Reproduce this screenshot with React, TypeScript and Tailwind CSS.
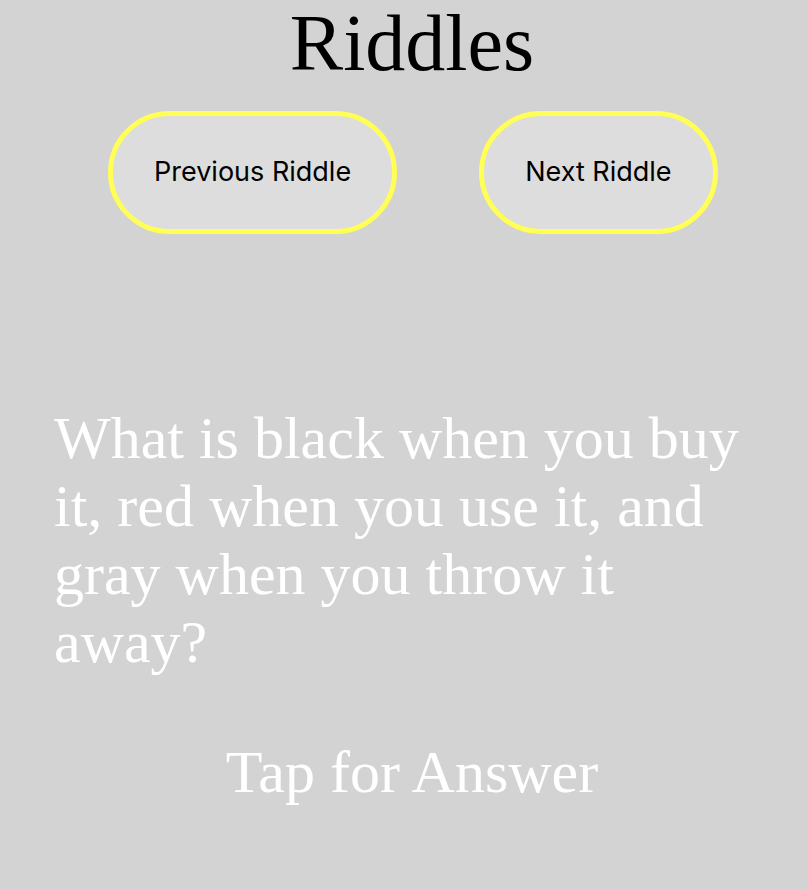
export default function App() {
  return (
    <div className="min-h-[890px] w-full bg-[#d3d3d3] pl-[16px]">
      <h1 className="text-center font-['Liberation_Serif',serif] text-[80px] leading-[86px] text-black">
        Riddles
      </h1>

      <div className="mt-[25px] flex gap-[82px] pl-[92px]">
        <button className="flex h-[123px] items-center rounded-full border-[5px] border-[#ffff55] bg-[#dddddd] px-[41px] font-['Inter',sans-serif] text-[27px] text-black">
          Previous Riddle
        </button>
        <button className="flex h-[123px] items-center rounded-full border-[5px] border-[#ffff55] bg-[#dddddd] px-[41px] font-['Inter',sans-serif] text-[27px] text-black">
          Next Riddle
        </button>
      </div>

      <p className="mt-[170px] pl-[38px] pr-[54px] font-['Liberation_Serif',serif] text-[60px] leading-[68px] text-white">
        What is black when you buy it, red when you use it, and gray when you throw it away?
      </p>

      <p className="mt-[62px] text-center font-['Liberation_Serif',serif] text-[60px] leading-[68px] text-white">
        Tap for Answer
      </p>
    </div>
  );
}
